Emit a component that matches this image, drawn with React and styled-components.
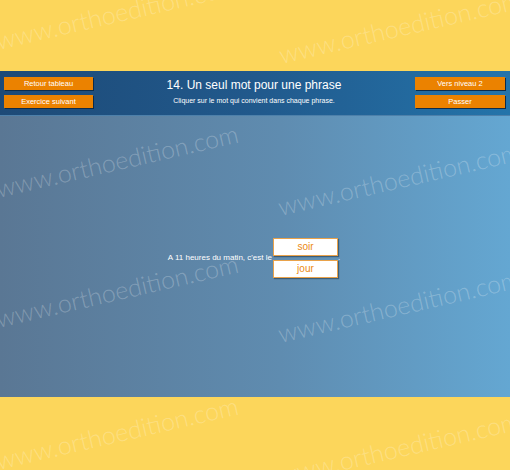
import React from "react";
import styled, { createGlobalStyle } from "styled-components";

const Global = createGlobalStyle`
  html, body { margin: 0; padding: 0; }
  body { width: 510px; height: 470px; overflow: hidden; font-family: "Liberation Sans", Arial, sans-serif; }
`;

const Page = styled.div`
  position: relative;
  width: 510px;
  height: 470px;
  display: flex;
  flex-direction: column;
  background: #fcd65b;
  overflow: hidden;
`;

const Band = styled.div`
  height: ${(p) => p.$h}px;
  flex: none;
  background: #fcd65b;
`;

const Header = styled.header`
  flex: none;
  height: 45px;
  display: grid;
  grid-template-columns: 89px 1fr 90px;
  align-items: start;
  padding: 6px 5px 0 4px;
  box-sizing: border-box;
  background: linear-gradient(to right, #1d4a77 0%, #21598c 50%, #2474aa 100%);
  border-bottom: 1px solid #4d80aa;
`;

const ButtonStack = styled.div`
  display: flex;
  flex-direction: column;
  gap: 5px;
`;

const NavButton = styled.button`
  height: 13px;
  width: 100%;
  border: none;
  padding: 0;
  margin: 0;
  background: #eb8200;
  color: #fff;
  font-family: "Liberation Sans", Arial, sans-serif;
  font-size: 7.5px;
  line-height: 13px;
  box-shadow: 1px 1px 0 #0e2c4a;
  cursor: pointer;
`;

const TitleBlock = styled.div`
  display: flex;
  flex-direction: column;
  align-items: center;
  color: #fff;
  padding-top: 1px;
`;

const Title = styled.h1`
  margin: 0;
  font-size: 12px;
  font-weight: normal;
  line-height: 14px;
`;

const Subtitle = styled.p`
  margin: 5px 0 0;
  font-size: 7px;
  line-height: 8px;
`;

const Main = styled.main`
  flex: none;
  height: 281px;
  display: flex;
  align-items: center;
  justify-content: center;
  background: linear-gradient(to right, #5a7794 0%, #5f8cb0 55%, #64a7d2 100%);
`;

const Sentence = styled.div`
  display: flex;
  align-items: center;
  color: #fff;
  font-size: 8px;
  margin-left: -2px;
  margin-top: 2px;
`;

const Choices = styled.div`
  display: flex;
  flex-direction: column;
  gap: 4px;
  margin-left: 1px;
`;

const Choice = styled.button`
  width: 65px;
  height: 18px;
  box-sizing: border-box;
  background: #fff;
  border: 1px solid #e9a24a;
  color: #ec8a12;
  font-family: "Liberation Sans", Arial, sans-serif;
  font-size: 10px;
  padding: 0;
  box-shadow: 1px 1px 1px rgba(0, 0, 0, 0.35);
  cursor: pointer;
`;

const Watermark = styled.span`
  position: absolute;
  left: ${(p) => p.$x}px;
  top: ${(p) => p.$y - 20}px;
  font-family: Lato, "Open Sans", sans-serif;
  font-weight: 300;
  font-size: 25px;
  line-height: 25px;
  color: rgba(255, 255, 255, 0.24);
  white-space: nowrap;
  transform: rotate(-13deg);
  transform-origin: 0 20px;
  pointer-events: none;
`;

const marks = [
  [-2, 48],
  [281, 62],
  [-2, 196],
  [280, 214],
  [-2, 326],
  [280, 341],
  [-2, 468],
  [280, 483],
];

export default function App() {
  return (
    <>
      <Global />
      <Page>
        <Band $h={71} />
        <Header>
          <ButtonStack>
            <NavButton>Retour tableau</NavButton>
            <NavButton>Exercice suivant</NavButton>
          </ButtonStack>
          <TitleBlock>
            <Title>14. Un seul mot pour une phrase</Title>
            <Subtitle>Cliquer sur le mot qui convient dans chaque phrase.</Subtitle>
          </TitleBlock>
          <ButtonStack>
            <NavButton>Vers niveau 2</NavButton>
            <NavButton>Passer</NavButton>
          </ButtonStack>
        </Header>
        <Main>
          <Sentence>
            <span>A 11 heures du matin, c'est le</span>
            <Choices>
              <Choice>soir</Choice>
              <Choice>jour</Choice>
            </Choices>
            <span>.</span>
          </Sentence>
        </Main>
        <Band $h={73} />
        {marks.map(([x, y], i) => (
          <Watermark key={i} $x={x} $y={y}>
            www.orthoedition.com
          </Watermark>
        ))}
      </Page>
    </>
  );
}
